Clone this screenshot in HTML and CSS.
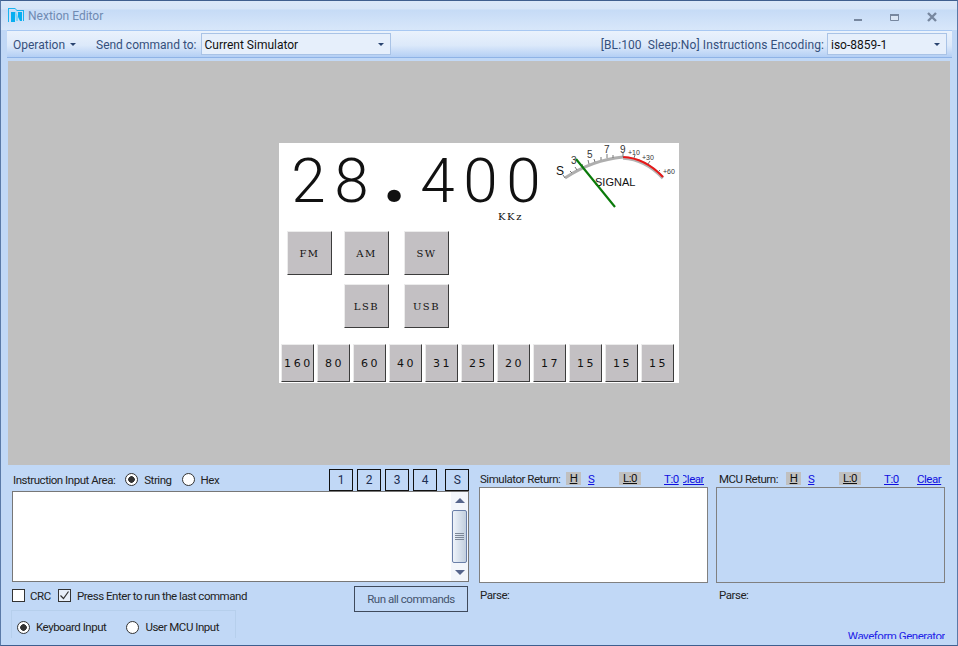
FILE: index.html
```html
<!DOCTYPE html>
<html>
<head>
  <meta charset="utf-8">
  <title>Nextion Editor</title>
  <link rel="stylesheet" href="styles.css">
</head>
<body>
  <div class="window">
    <div class="titlebar">
      <svg class="app-icon" width="16" height="14" viewBox="0 0 16 14">
        <path d="M0 0h7l2 2h7v11h-1V3H9L7 1H1v13H0z" fill="#18b4f0"/>
        <path d="M3 4h4v10H3zM10 4h4v9h-2L10 9z" fill="#08aef0"/>
        <path d="M7 4h1l2 5v4H8z" fill="#7fd4f6"/>
      </svg>
      <span class="app-title">Nextion Editor</span>
      <div class="win-controls">
        <svg width="10" height="12" viewBox="0 0 10 12"><rect x="1" y="9" width="8" height="2" fill="#77879f"/></svg>
        <svg width="10" height="12" viewBox="0 0 10 12"><path d="M.5 4.500h8v6h-8z" fill="#dbe6f5" stroke="#77879f"/><rect y="4" width="9" height="2" fill="#77879f"/></svg>
        <svg class="close-x" width="12" height="12" viewBox="0 0 12 12"><path d="M2 3l8 8M10 3l-8 8" stroke="#77879f" stroke-width="2.400"/></svg>
      </div>
    </div>

    <div class="toolbar">
      <span class="tool-label op">Operation <i class="caret"></i></span>
      <span class="tool-label">Send command to:</span>
      <div class="combo combo-target">Current Simulator <i class="caret"></i></div>
      <span class="tool-label status">[BL:100&nbsp; Sleep:No] Instructions Encoding:</span>
      <div class="combo combo-enc">iso-8859-1 <i class="caret"></i></div>
    </div>

    <div class="stage">
      <div class="screen">
        <div class="readout">
          <div class="freq-box">
            <div class="freq"><span>2</span><span>8</span><span class="dot">.</span><span>4</span><span>0</span><span>0</span></div>
            <div class="unit">KKz</div>
          </div>
          <svg class="meter" width="129" height="70" viewBox="550 143 129 70">
            <path d="M565 178Q592 160 623 157" fill="none" stroke="#aeaeae" stroke-width="3"/>
            <path d="M623 157Q645 158 663 177" fill="none" stroke="#b4b4b4" stroke-width="3.400" transform="translate(0 1)"/>
            <path d="M623 157Q645 158 663 177" fill="none" stroke="#e81818" stroke-width="2"/>
            <path d="M565 178l-2-3M572 173l-2-2M577 170l-2-3M583 167l-1-3M589 164l-1-4M595 162l-1-3M601 160l0-3M607 158l0-4M613 158l0-3M623 157l0-4M634 158l1-3M648 164l2-3M658 172l2-2" stroke="#777" stroke-width="1"/>
            <text x="556" y="175" class="m-big">S</text>
            <text x="571" y="164" class="m-mid">3</text>
            <text x="587" y="158" class="m-mid">5</text>
            <text x="604" y="153" class="m-mid">7</text>
            <text x="620" y="153" class="m-mid">9</text>
            <text x="628" y="155" class="m-small">+10</text>
            <text x="642" y="160" class="m-small">+30</text>
            <text x="663" y="174" class="m-small">+60</text>
            <text x="595" y="186" class="m-signal">SIGNAL</text>
            <path d="M576 159L615 207" stroke="#0a7a0a" stroke-width="2.200"/>
          </svg>
        </div>
        <div class="mode-row">
          <div class="hmi-btn mode">FM</div>
          <div class="hmi-btn mode am">AM</div>
          <div class="hmi-btn mode sw">SW</div>
        </div>
        <div class="mode-row second">
          <div class="hmi-btn mode am">LSB</div>
          <div class="hmi-btn mode sw">USB</div>
        </div>
        <div class="band-row">
          <div class="hmi-btn band">160</div>
          <div class="hmi-btn band">80</div>
          <div class="hmi-btn band">60</div>
          <div class="hmi-btn band">40</div>
          <div class="hmi-btn band">31</div>
          <div class="hmi-btn band">25</div>
          <div class="hmi-btn band">20</div>
          <div class="hmi-btn band">17</div>
          <div class="hmi-btn band">15</div>
          <div class="hmi-btn band">15</div>
          <div class="hmi-btn band">15</div>
        </div>
      </div>
    </div>

    <div class="bottom">
      <div class="input-panel">
        <div class="input-head">
          <span class="lbl area">Instruction Input Area:</span>
          <i class="radio on"></i><span class="lbl">String</span>
          <i class="radio"></i><span class="lbl">Hex</span>
          <div class="slots">
            <div class="slot">1</div>
            <div class="slot">2</div>
            <div class="slot">3</div>
            <div class="slot">4</div>
            <div class="slot last">S</div>
          </div>
        </div>
        <div class="input-box">
          <div class="scrollbar">
            <i class="arrow up"></i>
            <div class="thumb"><b></b><b></b><b></b><b></b></div>
            <i class="arrow down"></i>
          </div>
        </div>
        <div class="options">
          <div class="opt-left">
            <div class="opt-line">
              <i class="check"></i><span class="lbl crc">CRC</span>
              <i class="check ticked">
                <svg width="13" height="13" viewBox="0 0 13 13"><path d="M2.500 6.500l3 3 5-7" fill="none" stroke="#333" stroke-width="1.200"/></svg>
              </i>
              <span class="lbl">Press Enter to run the last command</span>
            </div>
            <div class="input-source">
              <i class="radio on"></i><span class="lbl kb">Keyboard Input</span>
              <i class="radio"></i><span class="lbl">User MCU Input</span>
            </div>
          </div>
          <div class="run-btn">Run all commands</div>
        </div>
      </div>

      <div class="return-panel sim">
        <div class="return-head">
          <span class="lbl name">Simulator Return:</span>
          <a class="link hl h">H</a>
          <a class="link s">S</a>
          <a class="link hl l">L:0</a>
          <a class="link t">T:0</a>
          <a class="link clear clipped">Clear</a>
        </div>
        <div class="return-box white"></div>
        <div class="lbl parse">Parse:</div>
      </div>

      <div class="return-panel mcu">
        <div class="return-head">
          <span class="lbl name">MCU Return:</span>
          <a class="link hl h">H</a>
          <a class="link s">S</a>
          <a class="link hl l">L:0</a>
          <a class="link t">T:0</a>
          <a class="link clear">Clear</a>
        </div>
        <div class="return-box"></div>
        <div class="lbl parse">Parse:</div>
        <div class="waveform">Waveform Generator</div>
      </div>
    </div>
  </div>
</body>
</html>
```

FILE: styles.css
```css
* {
  box-sizing: border-box;
}

html,
body {
  margin: 0;
  padding: 0;
  height: 100%;
  overflow: hidden;
}

body {
  font-family: Roboto, "Liberation Sans", sans-serif;
  font-size: 12px;
  color: #222;
}

i {
  display: block;
  font-style: normal;
}

.window {
  width: 958px;
  height: 646px;
  display: flex;
  flex-direction: column;
  overflow: hidden;
  background: #c1d8f6;
  border-top: 1px solid #3f5f8f;
  border-bottom: 1px solid #3f5f8f;
  border-left: 1px solid #5a7aa8;
  border-right: 1px solid #5a7aa8;
}

/* title bar */
.titlebar {
  height: 29px;
  display: flex;
  align-items: center;
  padding: 0 19px 0 7px;
  background: linear-gradient(#dbe8f9 0, #d6e5f8 8px, #c6dbf6 9px, #d8e7fa 29px);
  flex-shrink: 0;
}

.app-icon {
  margin-top: -1px;
}

.app-title {
  margin-left: 4px;
  font-size: 12px;
  color: #6f8ab2;
}

.win-controls {
  margin-left: auto;
  display: flex;
  align-items: center;
  gap: 27px;
}

.close-x {
  margin-left: -1px;
}

/* toolbar */
.toolbar {
  height: 28px;
  margin-left: 6px;
  margin-right: 5px;
  display: flex;
  align-items: center;
  background: linear-gradient(#eaf2fc, #dce9fa 55%, #b4cff4);
  border-top: 1px solid #a8c8f2;
  border-bottom: 1px solid #8fb3e6;
  padding-left: 6px;
  padding-top: 1px;
  flex-shrink: 0;
}

.tool-label {
  color: #35507c;
  font-size: 12px;
  white-space: nowrap;
}

.tool-label.op {
  width: 83px;
  display: flex;
  align-items: center;
  gap: 5px;
}

.tool-label.status {
  margin-left: auto;
  margin-right: -1px;
  letter-spacing: 0.1px;
}

.caret {
  width: 0;
  height: 0;
  border-left: 3px solid transparent;
  border-right: 3px solid transparent;
  border-top: 3px solid #2a4470;
}

.combo {
  height: 22px;
  margin-left: 4px;
  margin-top: -1px;
  display: flex;
  align-items: center;
  padding: 1px 6px 0 3px;
  background: #e6effb;
  border: 1px solid #a9c3e6;
  color: #111;
  font-size: 12px;
}

.combo .caret {
  margin-left: auto;
}

.combo-target {
  width: 190px;
}

.combo-enc {
  width: 120px;
  margin-right: 5px;
}

/* simulator canvas */
.stage {
  height: 404px;
  margin: 3px 7px 0 7px;
  display: flex;
  align-items: center;
  justify-content: center;
  background: #c0c0c0;
  flex-shrink: 0;
}

.screen {
  width: 400px;
  height: 240px;
  background: #fff;
  font-family: "DejaVu Serif", "Liberation Serif", serif;
  color: #111;
  overflow: hidden;
}

.readout {
  height: 88px;
  display: flex;
}

.freq-box {
  width: 271px;
  padding-left: 8px;
}

.freq {
  display: flex;
  align-items: baseline;
  height: 58px;
  margin-top: 10px;
  font-family: Roboto, "Liberation Sans", sans-serif;
  font-size: 62px;
  font-weight: 300;
  line-height: 56px;
}

.freq span {
  width: 43px;
  text-align: center;
}

.freq .dot {
  font-size: 84px;
  font-weight: 700;
  line-height: 40px;
}

.unit {
  font-size: 10px;
  line-height: 12px;
  letter-spacing: 1.6px;
  padding-left: 211px;
}

.meter {
  display: block;
}

.m-big {
  font: 12px "Liberation Sans", sans-serif;
  fill: #111;
}

.m-mid {
  font: 10px "Liberation Sans", sans-serif;
  fill: #333;
}

.m-small {
  font: 7px "Liberation Sans", sans-serif;
  fill: #333;
}

.m-signal {
  font: 11px "Liberation Sans", sans-serif;
  fill: #111;
}

.mode-row {
  display: flex;
  padding-left: 8px;
}

.mode-row.second {
  margin-top: 9px;
}

.hmi-btn {
  display: flex;
  align-items: center;
  justify-content: center;
  background: #c3c0c3;
  border-top: 1px solid #ececec;
  border-left: 1px solid #ececec;
  border-right: 1px solid #3c3c3c;
  border-bottom: 1px solid #3c3c3c;
  font-size: 10px;
  letter-spacing: 1.5px;
  color: #111;
}

.mode {
  width: 45px;
  height: 44px;
}

.mode.am {
  margin-left: 12px;
}

.mode.sw {
  margin-left: 15px;
}

.mode-row.second .mode.am {
  margin-left: 57px;
}

.band-row {
  display: flex;
  gap: 3px;
  margin-top: 16px;
  padding-left: 2px;
}

.band {
  width: 33px;
  height: 38px;
  font-family: "DejaVu Sans", sans-serif;
  font-size: 11px;
  letter-spacing: 2.600px;
  padding-left: 2px;
}

/* bottom area */
.bottom {
  flex: 1;
  min-height: 0;
  display: flex;
  overflow: hidden;
  padding-left: 11px;
  font-size: 11.500px;
  letter-spacing: -0.47px;
}

.lbl {
  color: #222;
  white-space: nowrap;
}

.input-panel {
  width: 457px;
  flex-shrink: 0;
}

.input-head {
  height: 26px;
  display: flex;
  align-items: center;
  padding-top: 3px;
}

.lbl.area {
  margin-left: 1px;
}

.radio {
  width: 13px;
  height: 13px;
  border-radius: 50%;
  background: #fff;
  border: 1px solid #333;
  margin-left: 10px;
  margin-right: 6px;
  flex-shrink: 0;
}

.radio.on {
  background: radial-gradient(circle, #333 0 3px, #fff 3.600px);
}

.slots {
  margin-left: auto;
  align-self: flex-end;
  display: flex;
  gap: 4px;
}

.slot {
  width: 24px;
  height: 22px;
  border: 1px solid #111;
  display: flex;
  align-items: center;
  justify-content: center;
  color: #1c2d50;
  font-size: 12px;
}

.slot.last {
  margin-left: 4px;
}

.input-box {
  height: 91px;
  border: 1px solid #777;
  background: #fff;
  display: flex;
  justify-content: flex-end;
}

.scrollbar {
  width: 17px;
  background: #f3f6fb;
  display: flex;
  flex-direction: column;
  align-items: center;
  justify-content: space-between;
  padding: 6px 0 6px;
}

.arrow {
  width: 0;
  height: 0;
  border-left: 5px solid transparent;
  border-right: 5px solid transparent;
}

.arrow.up {
  border-bottom: 5px solid #56658c;
}

.arrow.down {
  border-top: 5px solid #56658c;
}

.thumb {
  width: 15px;
  height: 53px;
  border: 1px solid #6a7fa8;
  border-radius: 2px;
  background: linear-gradient(90deg, #eef3fa 0, #dbe4ef 40%, #c3cfde 100%);
  display: flex;
  flex-direction: column;
  align-items: center;
  justify-content: center;
  gap: 1px;
}

.thumb b {
  display: block;
  width: 9px;
  height: 1px;
  background: #7d8797;
}

.options {
  display: flex;
  justify-content: space-between;
  padding-right: 1px;
}

.opt-left {
  padding-top: 7px;
}

.opt-line {
  display: flex;
  align-items: center;
  height: 13px;
}

.check {
  width: 13px;
  height: 13px;
  border: 1px solid #333;
  background: #fff;
}

.check.ticked {
  background: #e8eff9;
  margin-right: 6px;
  position: relative;
}

.check svg {
  position: absolute;
  left: -1px;
  top: -1px;
}

.lbl.crc {
  width: 28px;
  margin-left: 5px;
}

.input-source {
  width: 225px;
  height: 28px;
  margin-top: 8px;
  margin-left: -1px;
  display: flex;
  align-items: center;
  border: 1px solid #b6cfec;
  border-bottom: none;
  padding-top: 5px;
  padding-left: 5px;
}

.input-source .radio {
  margin-left: 0;
}

.lbl.kb {
  margin-right: 20px;
}

.run-btn {
  width: 114px;
  height: 26px;
  margin-top: 4px;
  border: 1px solid #3f4a5c;
  display: flex;
  align-items: center;
  justify-content: center;
  color: #44546e;
}

/* return panels */
.return-panel {
  width: 229px;
  flex-shrink: 0;
}

.return-panel.sim {
  margin-left: 10px;
  margin-right: 8px;
}

.return-head {
  height: 22px;
  display: flex;
  align-items: center;
  padding-top: 5px;
}

.lbl.name {
  width: 87px;
  padding-left: 1px;
}

.mcu .lbl.name {
  width: 70px;
  padding-left: 3px;
}

.link {
  color: #1010e0;
  text-decoration: underline;
  flex-shrink: 0;
}

.link.hl {
  background: #c0c0c0;
  color: #111;
  text-align: center;
  height: 13px;
  line-height: 13px;
}

.link.h {
  width: 15px;
}

.link.s {
  margin-left: 7px;
  width: 7px;
}

.link.l {
  margin-left: 24px;
  width: 22px;
}

.link.t {
  margin-left: 23px;
  width: 16px;
}

.link.clear {
  margin-left: 3px;
}

.mcu .link.clear {
  margin-left: 17px;
}

.clipped {
  width: 21px;
  overflow: hidden;
  direction: rtl;
  white-space: nowrap;
}

.return-box {
  height: 96px;
  border: 1px solid #808080;
}

.return-box.white {
  background: #fff;
}

.parse {
  margin-top: 5px;
  padding-left: 1px;
}

.mcu .parse {
  padding-left: 3px;
}

.waveform {
  height: 10px;
  margin-top: 27px;
  overflow: hidden;
  text-align: right;
  color: #2323e8;
  line-height: 15px;
}
```
